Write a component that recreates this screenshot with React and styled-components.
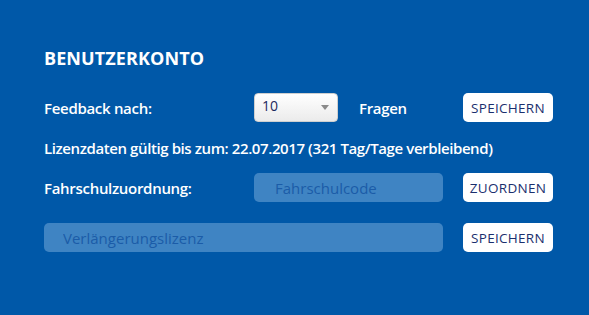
import React from "react";
import styled, { createGlobalStyle } from "styled-components";

const Global = createGlobalStyle`
body{
    margin:0;
    background:#0058a8;
    font-family:'Open Sans', 'Liberation Sans', sans-serif;
}
`

export default function App() {
    return (
        <>
            <Global />
            <Pagina>
                <Titulo>BENUTZERKONTO</Titulo>
                <Linha>
                    <Rotulo>Feedback nach:</Rotulo>
                    <Meio>
                        <Seletor>
                            <select defaultValue="10">
                                <option>5</option>
                                <option>10</option>
                                <option>20</option>
                            </select>
                        </Seletor>
                        <Rotulo>Fragen</Rotulo>
                    </Meio>
                    <Botao>SPEICHERN</Botao>
                </Linha>
                <Info>Lizenzdaten gültig bis zum: 22.07.2017 (321 Tag/Tage verbleibend)</Info>
                <Linha>
                    <Rotulo>Fahrschulzuordnung:</Rotulo>
                    <Campo placeholder="Fahrschulcode" />
                    <Botao>ZUORDNEN</Botao>
                </Linha>
                <Linha $topo={21}>
                    <Campo $largo placeholder="Verlängerungslizenz" />
                    <Botao>SPEICHERN</Botao>
                </Linha>
            </Pagina>
        </>
    )
}

const Pagina = styled.div`
box-sizing:border-box;
width:589px;
height:315px;
padding:47px 0 0 44px;
background:#0058a8;
color:#FFFFFF;
`

const Titulo = styled.h1`
margin:0 0 24px;
font-size:18px;
line-height:22px;
font-weight:700;
letter-spacing:0.1px;
`

const Linha = styled.div`
display:grid;
grid-template-columns:190px 189px 90px;
column-gap:20px;
align-items:center;
height:29px;
margin-top:${p => p.$topo || 0}px;
`

const Rotulo = styled.span`
font-size:15px;
font-weight:600;
letter-spacing:-0.3px;
`

const Meio = styled.div`
display:flex;
align-items:center;
gap:21px;
`

const Seletor = styled.div`
position:relative;
width:84px;
height:29px;
select{
    all:unset;
    box-sizing:border-box;
    width:84px;
    height:29px;
    padding:2px 0 0 7px;
    border:1px solid #cfcfcf;
    border-radius:4px;
    background:linear-gradient(#ffffff, #ebebeb);
    color:#1c2a5e;
    font-family:'Open Sans', sans-serif;
    font-size:14px;
}
&::after{
    content:"";
    position:absolute;
    right:9px;
    top:12px;
    border-left:4px solid transparent;
    border-right:4px solid transparent;
    border-top:5px solid #8a8a8a;
    pointer-events:none;
}
`

const Info = styled.div`
height:27px;
margin:12px 0;
display:flex;
align-items:center;
font-size:15px;
font-weight:600;
letter-spacing:-0.4px;
`

const Campo = styled.input`
all:unset;
box-sizing:border-box;
height:29px;
padding-left:${p => p.$largo ? 19 : 21}px;
grid-column:${p => p.$largo ? "1 / 3" : "auto"};
border-radius:5px;
background:#3f84c3;
font-family:'Open Sans', sans-serif;
font-size:15px;
color:#1b5ca8;
&::placeholder{
    color:#1b5ca8;
}
`

const Botao = styled.button`
all:unset;
box-sizing:border-box;
height:29px;
display:flex;
align-items:center;
justify-content:center;
border-radius:5px;
background:#FFFFFF;
color:#1b2f6e;
font-family:'Open Sans', sans-serif;
font-size:13.5px;
letter-spacing:0.3px;
`
